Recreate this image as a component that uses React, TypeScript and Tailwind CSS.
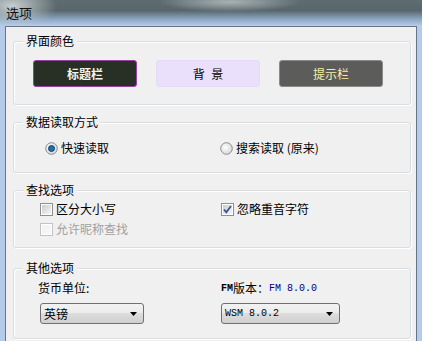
import { twMerge } from "tailwind-merge";
import type { ReactNode } from "react";

function Group({
  label,
  className,
  children,
}: {
  label: string;
  className?: string;
  children?: ReactNode;
}) {
  return (
    <div
      className={twMerge(
        "ml-[7px] mr-[5px] border border-[#d5dfe5] rounded-[3px] shadow-[inset_1px_1px_0_#ffffff,1px_1px_0_#ffffff]",
        className
      )}
    >
      <div className="-mt-[9px] ml-[9px] w-fit bg-[#f0f0f0] px-[3px] leading-[16px] text-black">
        {label}
      </div>
      {children}
    </div>
  );
}

function Radio({ checked, id }: { checked?: boolean; id: string }) {
  return (
    <svg width="13" height="13" viewBox="0 0 13 13" className="shrink-0">
      <defs>
        <radialGradient id={id} cx="0.4" cy="0.4" r="0.7">
          <stop offset="0" stopColor="#ffffff" />
          <stop offset="1" stopColor="#cfd1d3" />
        </radialGradient>
      </defs>
      <circle cx="6.5" cy="6.5" r="5.8" fill={`url(#${id})`} stroke="#8c8e90" />
      {checked && (
        <circle cx="6.5" cy="6.5" r="3" fill="#1d6fb0" stroke="#0d3a66" strokeWidth="0.9" />
      )}
    </svg>
  );
}

function Check({ checked, disabled, id }: { checked?: boolean; disabled?: boolean; id: string }) {
  return (
    <svg width="13" height="13" viewBox="0 0 13 13" className="shrink-0">
      <defs>
        <linearGradient id={id} x1="0" y1="0" x2="1" y2="1">
          <stop offset="0" stopColor={disabled ? "#f2f2f2" : "#c9ccd1"} />
          <stop offset="1" stopColor={disabled ? "#f7f7f7" : "#f6f6f6"} />
        </linearGradient>
      </defs>
      <rect x="0.5" y="0.5" width="12" height="12" fill="#ffffff" stroke={disabled ? "#c2c2c2" : "#8e8f8f"} />
      <rect x="2" y="2" width="9" height="9" fill={`url(#${id})`} />
      {checked && (
        <path d="M3 6.5 L5.3 9.2 L10 3" fill="none" stroke="#3f5592" strokeWidth="1.8" />
      )}
    </svg>
  );
}

function Combo({ text, mono, className }: { text: string; mono?: boolean; className?: string }) {
  return (
    <div
      className={twMerge(
        "h-[21px] flex items-center justify-between pl-[3px] pr-[6px] border border-[#707070] rounded-[3px] bg-[linear-gradient(#f2f2f2,#ebebeb_50%,#dddddd_50%,#cfcfcf)]",
        className
      )}
    >
      <span className={mono ? "font-['Liberation_Mono',monospace] text-[10px]" : ""}>{text}</span>
      <svg width="7" height="4" viewBox="0 0 7 4">
        <path d="M0 0 H7 L3.5 4 Z" fill="#000000" />
      </svg>
    </div>
  );
}

export default function App() {
  return (
    <div className="w-[422px] h-[341px] overflow-hidden bg-[#b4cbe9] font-['Noto_Sans_CJK_SC',sans-serif] text-[12px] text-black">
      <div className="h-[26px] pl-[6px] flex items-center text-[13px] text-[#111] bg-[radial-gradient(ellipse_45px_22px_at_12px_6px,#c8cecf,transparent),radial-gradient(ellipse_70px_10px_at_230px_2px,#a9b3b5,transparent),linear-gradient(to_bottom,#5f6d71,#57666b_40%,#8fa8c4_75%,#b7cdea)]">
        选项
      </div>
      <div className="h-[315px] flex px-[5px]">
        <div className="flex-1 bg-[#f0f0f0] border border-b-0 border-[#66758a] flex flex-col">
          <Group label="界面颜色" className="mt-[14px] h-[64px] shrink-0">
            <div className="mt-[11px] pl-[19px] flex gap-[19px]">
              <div className="w-[104px] h-[27px] flex items-center justify-center rounded-[3px] border border-[#9a3fa6] bg-[#283026] text-[#f4f4ec] font-bold">
                标题栏
              </div>
              <div className="w-[104px] h-[27px] flex items-center justify-center rounded-[3px] border border-[#e4dcf6] bg-[#ebe0fc] [word-spacing:4px]">
                背 景
              </div>
              <div className="w-[104px] h-[27px] flex items-center justify-center rounded-[3px] border border-[#8a8a88] bg-[#5c5c5a] text-[#f2f2a4]">
                提示栏
              </div>
            </div>
          </Group>

          <Group label="数据读取方式" className="mt-[17px] h-[51px] shrink-0">
            <div className="mt-[10px] h-[16px] pl-[31px] flex items-center">
              <div className="w-[175px] flex items-center gap-[3px]">
                <Radio checked id="r1" />
                <span>快速读取</span>
              </div>
              <div className="flex items-center gap-[3px]">
                <Radio id="r2" />
                <span>搜索读取 (原来)</span>
              </div>
            </div>
          </Group>

          <Group label="查找选项" className="mt-[17px] h-[58px] shrink-0">
            <div className="mt-[3px] pl-[26px] flex flex-col gap-[4px]">
              <div className="h-[16px] flex items-center">
                <div className="w-[181px] flex items-center gap-[3px]">
                  <Check id="c1" />
                  <span>区分大小写</span>
                </div>
                <div className="flex items-center gap-[3px]">
                  <Check checked id="c3" />
                  <span>忽略重音字符</span>
                </div>
              </div>
              <div className="h-[16px] flex items-center gap-[3px] text-[#a0a0a0]">
                <Check disabled id="c2" />
                <span>允许昵称查找</span>
              </div>
            </div>
          </Group>

          <Group label="其他选项" className="mt-[20px] h-[71px] shrink-0">
            <div className="mt-[4px] pl-[24px] flex">
              <div className="w-[183px] flex flex-col">
                <div className="h-[16px] flex items-center">货币单位:</div>
                <Combo text="英镑" className="mt-[7px] ml-[2px] w-[104px]" />
              </div>
              <div className="flex flex-col">
                <div className="h-[16px] flex items-center">
                  <span className="font-['Liberation_Mono',monospace] text-[10px] font-bold">FM</span>
                  <span>版本：</span>
                  <span className="font-['Liberation_Mono',monospace] text-[10px] text-[#000080]">FM 8.0.0</span>
                </div>
                <Combo text="WSM 8.0.2" mono className="mt-[7px] w-[119px]" />
              </div>
            </div>
          </Group>
        </div>
      </div>
    </div>
  );
}
